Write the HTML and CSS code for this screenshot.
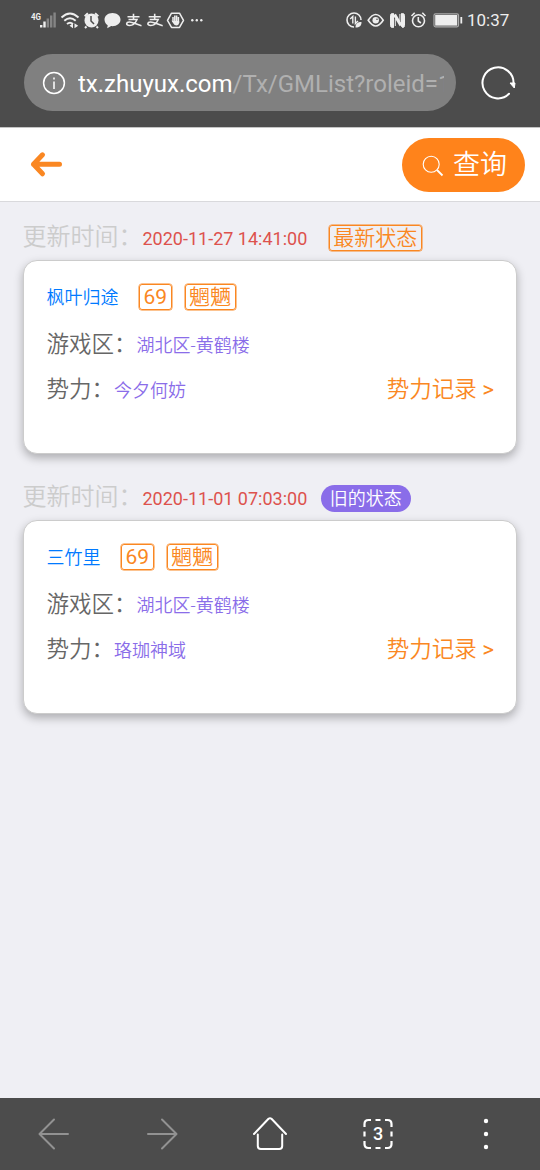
FILE: index.html
```html
<!DOCTYPE html>
<html lang="zh-CN">
<head>
<meta charset="utf-8">
<title>更新状态</title>
<link rel="stylesheet" href="styles.css">
</head>
<body>
<div class="screen">
  <header class="browser">
    <div class="status">
      <svg class="status-left" width="180" height="24" viewBox="28 8 180 24" fill="none" stroke="#eee" stroke-width="1.5">
        <text class="net" x="31" y="19.500" textLength="10" lengthAdjust="spacingAndGlyphs">4G</text>
        <g stroke-width="2.400"><path d="M41.200 27.500v-2.500M44.500 27.500v-6"/><path stroke="#858585" d="M47.800 27.500v-9M51.200 27.500v-12M54.600 27.500v-15"/></g>
        <path d="M61.500 17.500q8.500-8 17 0M64.300 20.800q5.700-5 11.400 0M67 24q3-2.500 6 0" stroke-width="1.900"/>
        <path d="M73 23.200v5l-3.500-2.500zM74.500 23.200v5l3.700-2.500z" fill="#eee" stroke="none"/>
        <circle cx="91.500" cy="20.500" r="7" fill="#eee" stroke="none"/>
        <path d="M84.700 16.300l3.200-3M98.300 16.300l-3.200-3M86.500 26.500l-1.500 1.500M96.500 26.500l1.500 1.500" stroke-width="2"/>
        <path d="M91 16v5l3 3" stroke="#4c4c4c"/>
        <path d="M112.500 13c-4.500 0-8 2.900-8 6.500 0 2.700 1.400 4.600 3.200 5.700l-.5 3 4-2.100c5.500.4 9.300-2.500 9.300-6.600 0-3.600-3.500-6.500-8-6.500z" fill="#eee" stroke="none"/>
        <path d="M127.500 16.700h12M133.500 13.800v5.500M128.500 19.500h8.500c-1.500 3.500-4.500 6-7.500 6-4 0-3.500-3.500 0-3.500 3.500 0 6.500 2.500 12 3.700" stroke-width="1.600"/>
        <path d="M148.700 16.700h12M154.700 13.800v5.500M149.700 19.500h8.500c-1.500 3.500-4.500 6-7.500 6-4 0-3.500-3.500 0-3.500 3.500 0 6.500 2.500 12 3.700" stroke-width="1.600"/>
        <path d="M171.500 13.200h8l4 7.100-4 7.100h-8l-4-7.100z" stroke-width="1.500" stroke-linejoin="round"/>
        <path d="M173 17v5M174.800 15.500v7M176.600 15.500v7M178.400 17v6" stroke-width="1.500"/>
        <path d="M171.500 20.500l1.500.5h6.200v2q-.7 2.500-2.700 2.500t-3.500-2.500z" fill="#eee" stroke="none"/>
        <g fill="#eee" stroke="none"><circle cx="192.300" cy="20.300" r="1.200"/><circle cx="196.800" cy="20.300" r="1.200"/><circle cx="201.300" cy="20.300" r="1.200"/></g>
      </svg>
      <div class="status-right">
        <svg width="120" height="24" viewBox="344 8 120 24" fill="none" stroke="#eee" stroke-width="1.600">
          <path d="M361 20a7 7 0 1 0-7 7"/><path d="M352.800 23.500v-7l-2.600 2.500M355.400 16.500v7l2.600-2.500" stroke-width="1.400"/>
          <path d="M355.500 27.500c0-4 2-5.500 6-5.500 0 4-2 5.500-6 5.500z" fill="#eee" stroke="none"/>
          <path d="M368.200 20.300q7.500-11.500 15 0-7.500 11.500-15 0z"/><circle cx="375.700" cy="20.300" r="3.200" fill="#eee" stroke="none"/><circle cx="377" cy="19.200" r=".8" fill="#4c4c4c" stroke="none"/>
          <path d="M393.500 13.500v14h-1q-2 0-2-2v-10q0-2 2-2zM401.500 26.500v-13h1q2 0 2 2v10q0 2-2 2z" fill="#eee" stroke-width="1"/>
          <path d="M394.500 14.500l6.500 11" stroke-width="3.200"/>
          <path d="M395.300 19v7M399.900 14v7" stroke-width="1"/>
          <circle cx="418.500" cy="20.800" r="6"/><path d="M418.300 17v4l2.600 2M411.500 16l3.200-3.200M425.500 16l-3.200-3.200"/>
          <rect x="434" y="13.800" width="24.500" height="13" rx="1.500" stroke="#aaa" stroke-width="1.200"/><rect x="435.200" y="15" width="22" height="10.600" fill="#eee" stroke="none"/><path d="M461.300 17v6.500" stroke-width="1.800"/>
        </svg>
        <span class="clock">10:37</span>
      </div>
    </div>
    <div class="address">
      <div class="url-box">
        <svg width="24" height="24" viewBox="0 0 24 24" fill="none" stroke="#fff" stroke-width="1.500"><circle cx="12" cy="12" r="10.400"/><path d="M12 10.500v7.500M12 6.400v2"/></svg>
        <div class="url">tx.zhuyux.com<span class="path">/Tx/GMList?roleid=1</span></div>
      </div>
      <svg class="reload" width="36" height="36" viewBox="0 0 36 36" fill="none" stroke="#fff" stroke-width="2"><path d="M29 28.800A15.500 15.500 0 1 1 33.500 18.500" stroke-linecap="round"/><path d="M30 18h5l-.7 5z" fill="#fff" stroke-width="1"/></svg>
    </div>
  </header>
  <nav class="topbar">
    <svg width="34" height="28" viewBox="0 0 34 28" fill="none" stroke="#fa8722" stroke-width="5" stroke-linecap="round" stroke-linejoin="round"><path d="M30.500 13.300H4.500M13.500 3.800l-9 9.500 9 9.500"/></svg>
    <button class="query"><svg width="22" height="22" viewBox="0 0 22 22" fill="none" stroke="#fff"><circle cx="9.200" cy="9.200" r="8" stroke-width="1.100"/><path d="M15 15l5.500 5.500" stroke-width="1.800"/></svg><span>查询</span></button>
  </nav>
  <main class="list">
    <section class="entry">
      <div class="updated"><span class="label">更新时间：</span><span class="date">2020-11-27 14:41:00</span><span class="tag latest">最新状态</span></div>
      <article class="card">
        <div class="role"><span class="name">枫叶归途</span><span class="tag level">69</span><span class="tag">魍魉</span></div>
        <div class="row zone"><span>游戏区：</span><span class="value">湖北区-黄鹤楼</span></div>
        <div class="row"><span>势力：</span><span class="value">今夕何妨</span><a class="record">势力记录 <span class="more">&gt;</span></a></div>
      </article>
    </section>
    <section class="entry">
      <div class="updated"><span class="label">更新时间：</span><span class="date">2020-11-01 07:03:00</span><span class="old">旧的状态</span></div>
      <article class="card">
        <div class="role"><span class="name">三竹里</span><span class="tag level">69</span><span class="tag">魍魉</span></div>
        <div class="row zone"><span>游戏区：</span><span class="value">湖北区-黄鹤楼</span></div>
        <div class="row"><span>势力：</span><span class="value">珞珈神域</span><a class="record">势力记录 <span class="more">&gt;</span></a></div>
      </article>
    </section>
  </main>
  <footer class="toolbar">
    <svg width="36" height="36" viewBox="0 0 36 36" fill="none" stroke="#929292" stroke-width="2" stroke-linecap="round" stroke-linejoin="round"><path d="M32 18H4M18 3.500L3.500 18 18 32.500"/></svg>
    <svg width="36" height="36" viewBox="0 0 36 36" fill="none" stroke="#929292" stroke-width="2" stroke-linecap="round" stroke-linejoin="round"><path d="M4 18h28M18 3.500L32.500 18 18 32.500"/></svg>
    <svg width="36" height="36" viewBox="0 0 36 36" fill="none" stroke="#fff" stroke-width="2" stroke-linecap="round" stroke-linejoin="round"><path d="M2 18L16.500 2.800q1.500-1.200 3 0L34 18M5.800 18.500V30q0 3 3 3h18.400q3 0 3-3V18.500"/></svg>
    <svg width="36" height="36" viewBox="0 0 36 36" fill="none" stroke="#fff" stroke-width="2.200"><path d="M4.500 11V8q0-4 4-4H11M25 4h2.500q4 0 4 4v3M31.500 25v3q0 4-4 4H25M11 32H8.500q-4 0-4-4v-3M15.500 4h5M15.500 32h5M4.500 15.500v5M31.500 15.500v5"/><text class="tabs" x="18" y="24.200">3</text></svg>
    <svg width="36" height="36" viewBox="0 0 36 36" fill="#fff"><circle cx="18" cy="5" r="2.200"/><circle cx="18" cy="18" r="2.200"/><circle cx="18" cy="31" r="2.200"/></svg>
  </footer>
</div>
</body>
</html>
```
FILE: styles.css
```css
* { box-sizing: border-box; }
body {
  margin: 0;
  font-family: Roboto, "Noto Sans CJK SC", sans-serif;
  color: #666;
}
svg { flex: none; display: block; }
.screen {
  width: 540px;
  height: 1170px;
  display: flex;
  flex-direction: column;
  background: #efeff4;
  overflow: hidden;
}
.browser { height: 127px; background: #4c4c4c; flex: none; }
.status {
  height: 40px;
  padding: 0 31px 0 28px;
  display: flex;
  align-items: center;
  justify-content: space-between;
}
.status-right { display: flex; align-items: center; gap: 3px; }
.clock { width: 42px; font-size: 17px; line-height: 24px; color: #eee; }
.net { font-size: 9px; font-weight: 700; fill: #eee; stroke: none; }
.address {
  padding: 14px 24px 0;
  display: flex;
  align-items: center;
  justify-content: space-between;
}
.url-box {
  width: 432px;
  height: 57px;
  border-radius: 29px;
  background: #808080;
  padding: 0 12px 0 18px;
  display: flex;
  align-items: center;
  gap: 12px;
}
.url {
  flex: 1;
  overflow: hidden;
  white-space: nowrap;
  color: #fff;
  font-size: 24px;
  line-height: 36px;
  padding-top: 2px;
}
.path { color: #b0b0b0; }
.topbar {
  flex: none;
  height: 75px;
  padding: 1px 15px 0 29px;
  background: #fff;
  border-top: 1px solid #c4c4c4;
  border-bottom: 1px solid #d9d9dc;
  display: flex;
  align-items: center;
  justify-content: space-between;
}
.query {
  width: 123.5px;
  height: 54px;
  border: 0;
  border-radius: 27px;
  background: #ff831b;
  color: #fff;
  font: inherit;
  font-size: 27px;
  line-height: 40px;
  font-weight: 350;
  padding: 0 0 1px 20.5px;
  display: flex;
  align-items: center;
  gap: 9px;
}
.query svg { margin-top: 2px; }
.list { flex: 1; padding: 17px 23px 0; }
.entry { height: 260px; }
.updated {
  height: 41px;
  display: flex;
  align-items: baseline;
  line-height: 36px;
}
.label { font-size: 24px; font-weight: 350; color: #ccc; margin-left: -.5px; }
.date { font-size: 18px; color: #dd524d; }
.tag {
  height: 26px;
  padding: 0 3.5px;
  border: 1px solid #fa8722;
  box-shadow: 0 0 0 .5px #fa8722;
  border-radius: 3px;
  font-size: 21px;
  font-weight: 350;
  line-height: 24px;
  color: #fa8722;
}
.level { font-weight: 400; line-height: 25px; }
.latest { margin-left: 21.5px; }
.old {
  margin-left: 13.5px;
  width: 90px;
  height: 27px;
  border-radius: 14px;
  background: #8a6de9;
  color: #fff;
  text-align: center;
  font-size: 18px;
  font-weight: 350;
  line-height: 27px;
}
.card {
  height: 194px;
  border: 1px solid #ccc;
  border-radius: 14px;
  background: #fff;
  box-shadow: 0 4px 10px rgba(0, 0, 0, .28);
  padding: 22px 22px 0 22.5px;
}
.role { display: flex; align-items: center; height: 28px; }
.name { font-size: 18px; font-weight: 350; color: #007aff; margin-right: 20.5px; line-height: 24px; padding-top: 1px; }
.role .tag + .tag { margin-left: 13px; }
.row {
  display: flex;
  align-items: baseline;
  height: 45px;
  font-size: 22.5px;
  font-weight: 350;
  line-height: 45px;
}
.zone { margin-top: 11px; }
.value { font-size: 18px; color: #8a6de9; }
.record { margin-left: auto; color: #fa8722; }
.more { font-weight: 400; }
.toolbar {
  flex: none;
  height: 72px;
  background: #4c4c4c;
  display: grid;
  grid-template-columns: repeat(5, 1fr);
  place-items: center;
}
.tabs { font-size: 18px; font-weight: 500; fill: #fff; stroke: none; text-anchor: middle; }
```
